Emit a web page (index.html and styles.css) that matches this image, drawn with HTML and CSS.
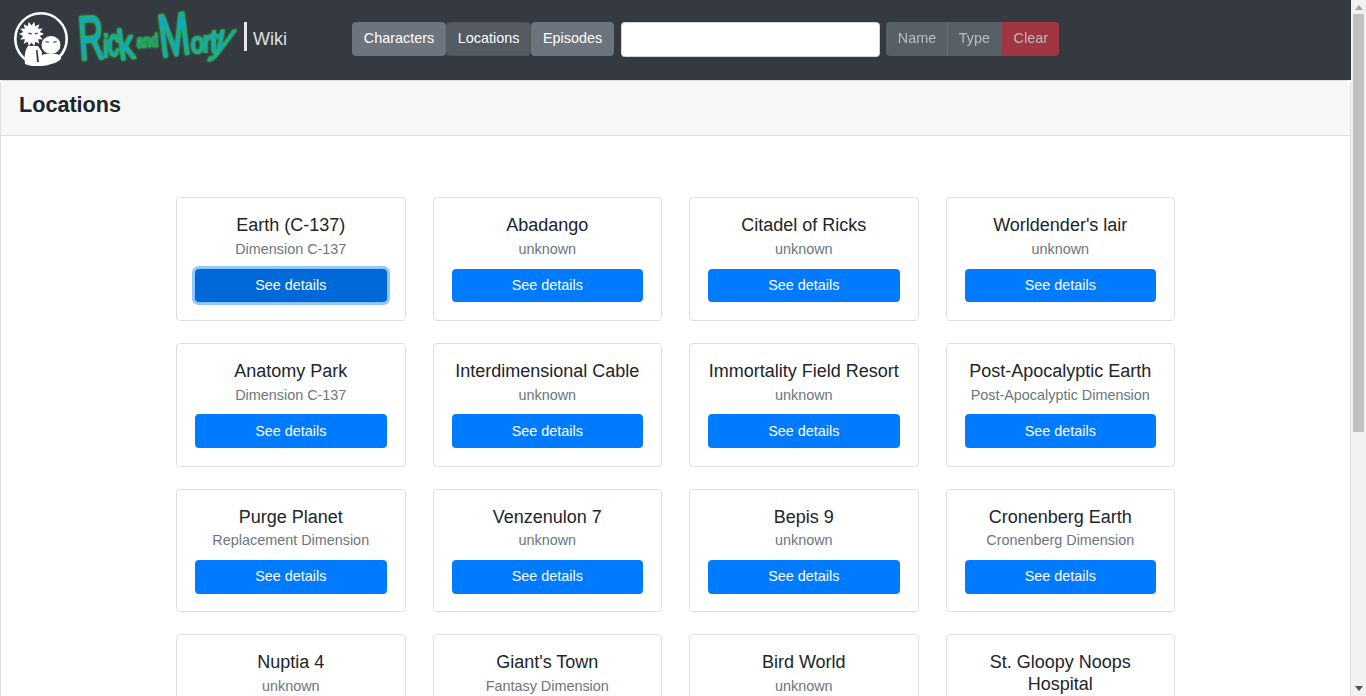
FILE: index.html
```html
<!DOCTYPE html>
<html lang="en">
<head>
    <meta charset="UTF-8">
    <meta name="viewport" content="width=device-width, initial-scale=1.0">
    <title>Rick and Morty Wiki</title>
    <link rel="stylesheet" href="styles.css">
</head>
<body>
    <div class="main">
        <nav class="navbar">
            <a class="brand" href="#">
                <svg class="brand-icon" width="54" height="54" viewBox="0 0 54 54">
                    <circle cx="27" cy="27" r="25.700" fill="#343a40" stroke="#fff" stroke-width="2.600"/>
                    <path fill="#fff" d="M11 52c-1-7 0-14 3-18l10 0 4 6 0 14c-6 1-12 0-17-2z"/>
                    <polygon fill="#fff" points="30,22 25.800,23.900 28.800,27.400 24.100,27.300 25.300,31.800 21.200,29.700 20.300,34.200 17.500,30.500 14.700,34.200 13.800,29.700 9.700,31.800 10.900,27.300 6.200,27.400 9.200,23.900 5,22 9.200,20.100 6.200,16.600 10.900,16.700 9.700,12.200 13.800,14.300 14.700,9.800 17.500,13.500 20.300,9.800 21.200,14.300 25.300,12.200 24.100,16.700 28.800,16.600 25.800,20.100"/>
                    <path fill="#343a40" d="M14 20.500l4 .8-.5 1.200-2.500-.6zM20.500 21.300l3.500-.8-.5 1.300-2 .6zM22 38l1.500 0 1.500 12-2 0z"/>
                    <ellipse cx="37" cy="33" rx="10" ry="9.500" fill="#fff" stroke="#343a40" stroke-width="1"/>
                    <path fill="#fff" d="M26 52c-1-4 0-9 5-10l12 0c3 1 4 3 4 5c-5 5-13 6-21 5z"/>
                    <path fill="#343a40" d="M31 29l4 .8-.4 1-2.500-.6zM39 29.800l4-.8-.7 1.200-2.500.6z"/>
                </svg>
                <svg class="brand-logo" width="170" height="78" viewBox="74 0 170 78">
                    <g class="logo-text">
                        <text transform="translate(80 60) rotate(-4) scale(.56 1)" font-size="62">R</text>
                        <text transform="translate(103 57) scale(.8 1)" font-size="32">i</text>
                        <text transform="translate(108 56) scale(.58 1)" font-size="38">c</text>
                        <text transform="translate(120 60) rotate(-8) scale(.75 1)" font-size="42">k</text>
                        <text class="logo-small" transform="translate(137 48) rotate(-4) scale(.82 1.250)" font-size="15">and</text>
                        <text transform="translate(161 57) rotate(-7) scale(.62 1)" font-size="60">M</text>
                        <text transform="translate(191 53) scale(.78 1)" font-size="30">o</text>
                        <text transform="translate(203 52) scale(.8 1)" font-size="30">r</text>
                        <text transform="translate(210 53) scale(.9 1)" font-size="34">t</text>
                        <text transform="translate(211 52) skewX(-25) scale(1 1.350)" font-size="30">y</text>
                    </g>
                </svg>
                <span class="brand-wiki">Wiki</span>
            </a>
            <div class="btn-group nav-links">
                <button class="btn btn-secondary">Characters</button>
                <button class="btn btn-secondary active">Locations</button>
                <button class="btn btn-secondary">Episodes</button>
            </div>
            <input class="search" type="text">
            <div class="btn-group filters">
                <button class="btn btn-secondary" disabled>Name</button>
                <button class="btn btn-secondary" disabled>Type</button>
                <button class="btn btn-danger" disabled>Clear</button>
            </div>
        </nav>

        <section class="page">
            <h4 class="page-header">Locations</h4>
            <div class="grid">
                <div class="card"><h5>Earth (C-137)</h5><p>Dimension C-137</p><button class="btn btn-primary focus">See details</button></div>
                <div class="card"><h5>Abadango</h5><p>unknown</p><button class="btn btn-primary">See details</button></div>
                <div class="card"><h5>Citadel of Ricks</h5><p>unknown</p><button class="btn btn-primary">See details</button></div>
                <div class="card"><h5>Worldender's lair</h5><p>unknown</p><button class="btn btn-primary">See details</button></div>
                <div class="card"><h5>Anatomy Park</h5><p>Dimension C-137</p><button class="btn btn-primary">See details</button></div>
                <div class="card"><h5>Interdimensional Cable</h5><p>unknown</p><button class="btn btn-primary">See details</button></div>
                <div class="card"><h5>Immortality Field Resort</h5><p>unknown</p><button class="btn btn-primary">See details</button></div>
                <div class="card"><h5>Post-Apocalyptic Earth</h5><p>Post-Apocalyptic Dimension</p><button class="btn btn-primary">See details</button></div>
                <div class="card"><h5>Purge Planet</h5><p>Replacement Dimension</p><button class="btn btn-primary">See details</button></div>
                <div class="card"><h5>Venzenulon 7</h5><p>unknown</p><button class="btn btn-primary">See details</button></div>
                <div class="card"><h5>Bepis 9</h5><p>unknown</p><button class="btn btn-primary">See details</button></div>
                <div class="card"><h5>Cronenberg Earth</h5><p>Cronenberg Dimension</p><button class="btn btn-primary">See details</button></div>
                <div class="card"><h5>Nuptia 4</h5><p>unknown</p></div>
                <div class="card"><h5>Giant's Town</h5><p>Fantasy Dimension</p></div>
                <div class="card"><h5>Bird World</h5><p>unknown</p></div>
                <div class="card"><h5>St. Gloopy Noops Hospital</h5></div>
            </div>
        </section>
    </div>
    <div class="scrollbar">
        <span class="arrow-up"></span>
        <div class="thumb"></div>
        <span class="arrow-down"></span>
    </div>
</body>
</html>
```

FILE: styles.css
```css
html {
    font-size: 14.4px;
}
body {
    display: flex;
    height: 100vh;
    margin: 0;
    overflow: hidden;
    font-family: "Liberation Sans", Arial, sans-serif;
    font-size: 14.4px;
    line-height: 1.5;
    color: #212529;
    background-color: #fff;
}
.main {
    flex: 1;
    min-width: 0;
    overflow: hidden;
}
.scrollbar {
    display: flex;
    flex-direction: column;
    align-items: center;
    flex: none;
    width: 15px;
    background-color: #f1f1f1;
}
.arrow-up {
    margin: 5px 0 4px;
    border: 4px solid transparent;
    border-top: 0;
    border-bottom: 5px solid #a3a3a3;
}
.arrow-down {
    margin: auto 0 5px;
    border: 4px solid transparent;
    border-bottom: 0;
    border-top: 5px solid #505050;
}
.thumb {
    width: 11px;
    height: 418px;
    background-color: #c1c1c1;
}
.navbar {
    display: flex;
    align-items: center;
    height: 80px;
    padding: 0 14px 2px;
    box-sizing: border-box;
    background-color: #343a40;
}
.brand {
    display: flex;
    align-items: center;
    width: 338px;
    flex: none;
    text-decoration: none;
}
.brand-icon {
    flex: none;
}
.brand-logo {
    flex: none;
    margin-left: 6px;
    filter: drop-shadow(0 0 1px #2fbf4a);
}
.logo-text text {
    font-family: "Liberation Sans", sans-serif;
    fill: #12a8c4;
    stroke: #2fae45;
    stroke-width: 2px;
    stroke-linejoin: round;
    paint-order: stroke;
    vector-effect: non-scaling-stroke;
}
.logo-text .logo-small {
    font-weight: bold;
    fill: #1f9f72;
    stroke-width: 1px;
}
.brand-wiki {
    margin: 0 0 5px 0;
    padding-left: 6px;
    border-left: 3px solid #e6e6e6;
    height: 29px;
    line-height: 34px;
    font-size: 18px;
    color: #e0e0e0;
}
.btn-group {
    display: flex;
}
.btn {
    font-family: inherit;
    font-size: 14.4px;
    line-height: 1.5;
    padding: 5.4px 10.8px;
    border: 1px solid transparent;
    border-radius: 3.6px;
    color: #fff;
}
.btn-secondary {
    background-color: #6c757d;
    border-color: #6c757d;
}
.btn-secondary.active {
    background-color: #545b62;
    border-color: #4e555b;
}
.btn-danger {
    background-color: #dc3545;
    border-color: #dc3545;
}
.btn-primary {
    background-color: #007bff;
    border-color: #007bff;
    width: 100%;
    padding: 5.2px 10.8px 4.8px;
}
.btn-primary.focus {
    background-color: #0069d9;
    border-color: #0062cc;
    box-shadow: 0 0 0 3px rgba(38, 143, 255, 0.5);
}
.btn:disabled {
    opacity: 0.65;
}
.filters .btn {
    border-radius: 0;
}
.filters .btn + .btn {
    margin-left: -1px;
}
.filters .btn:first-child {
    border-radius: 3.6px 0 0 3.6px;
}
.filters .btn:last-child {
    margin-left: 0;
    padding-right: 9.8px;
    border-radius: 0 3.6px 3.6px 0;
}
.search {
    width: 259px;
    height: 35px;
    box-sizing: border-box;
    margin: 0 6px 0 7px;
    padding: 5px 11px;
    border: 1px solid #ced4da;
    border-radius: 3.6px;
    background-color: #fff;
}
.page {
    border: 1px solid #dfdfdf;
    border-radius: 3.6px;
    box-sizing: border-box;
}
.page-header {
    margin: 0;
    height: 55px;
    box-sizing: border-box;
    padding: 11px 18px;
    font-size: 21.6px;
    font-weight: bold;
    line-height: 1.2;
    background-color: #f7f7f7;
    border-bottom: 1px solid #dfdfdf;
}
.grid {
    display: grid;
    grid-template-columns: repeat(4, 229.5px);
    column-gap: 27px;
    row-gap: 22px;
    justify-content: center;
    padding-top: 61px;
}
.card {
    border: 1px solid #dfdfdf;
    border-radius: 3.6px;
    padding: 17px 18px 17.6px;
    text-align: center;
}
.card h5 {
    margin: 0 0 2.2px;
    font-size: 18px;
    font-weight: normal;
    line-height: 1.2;
}
.card p {
    margin: 0 0 8.2px;
    color: #6c757d;
}
```
